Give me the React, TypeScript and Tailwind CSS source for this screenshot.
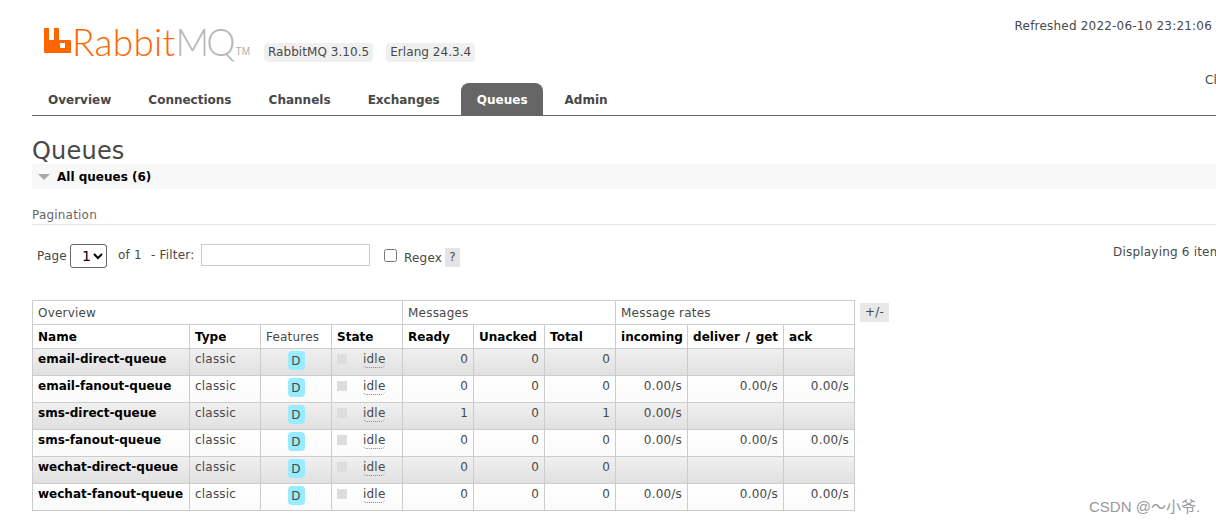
import { ReactNode } from 'react';

const tabs = ['Overview', 'Connections', 'Channels', 'Exchanges', 'Queues', 'Admin'];

const queues = [
  { name: 'email-direct-queue', ready: 0, total: 0, incoming: '', deliver: '', ack: '' },
  { name: 'email-fanout-queue', ready: 0, total: 0, incoming: '0.00/s', deliver: '0.00/s', ack: '0.00/s' },
  { name: 'sms-direct-queue', ready: 1, total: 1, incoming: '0.00/s', deliver: '', ack: '' },
  { name: 'sms-fanout-queue', ready: 0, total: 0, incoming: '0.00/s', deliver: '0.00/s', ack: '0.00/s' },
  { name: 'wechat-direct-queue', ready: 0, total: 0, incoming: '', deliver: '', ack: '' },
  { name: 'wechat-fanout-queue', ready: 0, total: 0, incoming: '0.00/s', deliver: '0.00/s', ack: '0.00/s' },
];

function Logo() {
  return (
    <div className="flex items-start">
      <svg width="27" height="25" viewBox="0 0 27 25" className="mt-[1px] shrink-0">
        <path
          fillRule="evenodd"
          fill="#ff6600"
          d="M0 1a1 1 0 0 1 1-1h4v12h5V0h4a1 1 0 0 1 1 1v11h11a1 1 0 0 1 1 1v11a1 1 0 0 1-1 1H1a1 1 0 0 1-1-1zM16 15v5h5v-5z"
        />
      </svg>
      <span className="font-['Lato',sans-serif] font-light text-[37px] leading-[30px] tracking-[0.3px] ml-[1px] text-[#ff6600]">
        Rabbit<span className="text-[#b8b8b8] tracking-[-3px]">MQ</span>
      </span>
      <span className="font-['Liberation_Sans',sans-serif] text-[10px] leading-none mt-[20px] ml-[3px] text-[#b0b0b0]">TM</span>
    </div>
  );
}

function Badge({ children }: { children: ReactNode }) {
  return <span className="bg-[#f0f0f0] rounded-[4px] px-[4px] h-[19px] leading-[19px] tracking-[0.05px] whitespace-nowrap">{children}</span>;
}

function Th({ children }: { children: ReactNode }) {
  return (
    <th className="border border-[#cccccc] px-[5px] h-[24px] text-left font-bold tracking-normal text-black align-middle whitespace-nowrap">
      {children}
    </th>
  );
}

function Num({ children }: { children: ReactNode }) {
  return <td className="border border-[#cccccc] pr-[5px] pt-[1px] text-right align-top">{children}</td>;
}

export default function App() {
  return (
    <div className="relative w-[1216px] h-[522px] overflow-hidden bg-white text-[12px] tracking-[0.2px] text-[#484848] font-['DejaVu_Sans',sans-serif]">
      <div className="flex h-[83px]">
        <div className="pl-[44px] pt-[27px] w-[264px] shrink-0">
          <Logo />
        </div>
        <div className="flex gap-[13px] pt-[43px] shrink-0">
          <Badge>RabbitMQ 3.10.5</Badge>
          <Badge>Erlang 24.3.4</Badge>
        </div>
        <div className="ml-auto pr-[4px] pt-[17px] whitespace-nowrap">Refreshed 2022-06-10 23:21:06</div>
      </div>
      <div className="absolute left-[1205px] top-[71px] whitespace-nowrap">Cluster</div>

      <div className="ml-[32px] h-[33px] border-b border-[#666666] flex tracking-normal">
        {tabs.map((tab) => (
          <div
            key={tab}
            className={
              tab === 'Queues'
                ? 'h-[32px] pl-[16px] pr-[15px] mr-[6px] leading-[34px] font-bold text-white bg-[#666666] rounded-t-[8px]'
                : 'h-[32px] px-[16px] mr-[5.1px] leading-[34px] font-bold text-[#484848]'
            }
          >
            {tab}
          </div>
        ))}
      </div>

      <h1 className="ml-[32px] mt-[20px] h-[28px] text-[24px] leading-[30px] font-normal text-[#484848]">Queues</h1>

      <div className="ml-[32px] h-[25px] bg-[#f8f8f8] flex items-center text-[12px] font-bold tracking-normal text-black">
        <svg width="12" height="6" viewBox="0 0 12 6" className="ml-[6px] mr-[7px]">
          <polygon points="0,0 12,0 6,6" fill="#a8a8a8" />
        </svg>
        All queues (6)
      </div>

      <div className="ml-[32px] mt-[18px] h-[18px] border-b border-[#e4e4e4] leading-[17px] text-[#666666]">Pagination</div>

      <div className="flex items-start ml-[37px] mt-[19px] h-[41px] whitespace-nowrap">
        <span className="mt-[3px] w-[33px] shrink-0">Page</span>
        <select className="w-[37px] h-[24px] shrink-0 border border-[#666666] rounded-[3px] pl-[7px] text-[14px] text-black bg-white">
          <option>1</option>
        </select>
        <span className="ml-[11px] mt-[2px] w-[33px] shrink-0">of 1</span>
        <span className="mt-[2px] w-[50px] shrink-0">- Filter:</span>
        <input className="w-[169px] h-[22px] shrink-0 border border-[#cccccc] bg-white" />
        <input type="checkbox" className="ml-[14px] mt-[5px] w-[13px] h-[13px] shrink-0" />
        <span className="ml-[7px] mt-[5px] w-[37px] shrink-0">Regex</span>
        <span className="ml-[4px] mt-[4px] w-[15px] h-[19px] shrink-0 leading-[19px] text-center bg-[#e4e4e4]">?</span>
        <span className="ml-[653px] -mt-[1px] shrink-0">Displaying 6 items</span>
      </div>

      <div className="flex items-start ml-[32px] mt-[15px]">
        <table className="border-collapse table-fixed w-[822px] shrink-0">
          <colgroup>
            <col className="w-[157px]" />
            <col className="w-[71px]" />
            <col className="w-[71px]" />
            <col className="w-[71px]" />
            <col className="w-[71px]" />
            <col className="w-[71px]" />
            <col className="w-[71px]" />
            <col className="w-[72px]" />
            <col className="w-[96px]" />
            <col className="w-[71px]" />
          </colgroup>
          <thead>
            <tr>
              <td colSpan={4} className="border border-[#cccccc] px-[5px] h-[24px]">Overview</td>
              <td colSpan={3} className="border border-[#cccccc] px-[5px] h-[24px]">Messages</td>
              <td colSpan={3} className="border border-[#cccccc] px-[5px] h-[24px]">Message rates</td>
            </tr>
            <tr>
              <Th>Name</Th>
              <Th>Type</Th>
              <td className="border border-[#cccccc] px-[5px] h-[24px] whitespace-nowrap">Features</td>
              <Th>State</Th>
              <Th>Ready</Th>
              <Th>Unacked</Th>
              <Th>Total</Th>
              <Th>incoming</Th>
              <Th><span className="[word-spacing:1.5px]">deliver / get</span></Th>
              <Th>ack</Th>
            </tr>
          </thead>
          <tbody>
            {queues.map((q, i) => (
              <tr
                key={q.name}
                className={i % 2 === 0 ? 'h-[27px] bg-gradient-to-b from-[#f0f0f0] to-[#e0e0e0]' : 'h-[27px] bg-gradient-to-b from-white to-[#fafafa]'}
              >
                <td className="border border-[#cccccc] px-[5px] pt-[1px] align-top font-bold tracking-normal text-black whitespace-nowrap">{q.name}</td>
                <td className="border border-[#cccccc] px-[5px] pt-[1px] align-top">classic</td>
                <td className="border border-[#cccccc] align-top text-center">
                  <span className="inline-block mt-[2px] w-[17px] h-[19px] leading-[21px] rounded-[4px] bg-[#99ebff] text-[#484848]">D</span>
                </td>
                <td className="border border-[#cccccc] pl-[5px] pt-[2px] align-top">
                  <div className="flex">
                    <span className="w-[10px] h-[10px] mt-[3px] bg-[#dddddd]" />
                    <span className="ml-[16px] h-[17px] leading-[16px] border-b border-dotted border-[#888888] rounded-b-[4px]">idle</span>
                  </div>
                </td>
                <Num>{q.ready}</Num>
                <Num>0</Num>
                <Num>{q.total}</Num>
                <Num>{q.incoming}</Num>
                <Num>{q.deliver}</Num>
                <Num>{q.ack}</Num>
              </tr>
            ))}
          </tbody>
        </table>
        <span className="ml-[5px] mt-[3px] w-[29px] h-[19px] leading-[19px] text-center bg-[#e8e8e8] shrink-0">+/-</span>
      </div>

      <div className="absolute left-[1089px] top-[496px] text-[15px] tracking-normal text-[#999999] whitespace-nowrap font-['Liberation_Sans','Noto_Sans_CJK_SC',sans-serif]">
        CSDN @～小爷.
      </div>
    </div>
  );
}
